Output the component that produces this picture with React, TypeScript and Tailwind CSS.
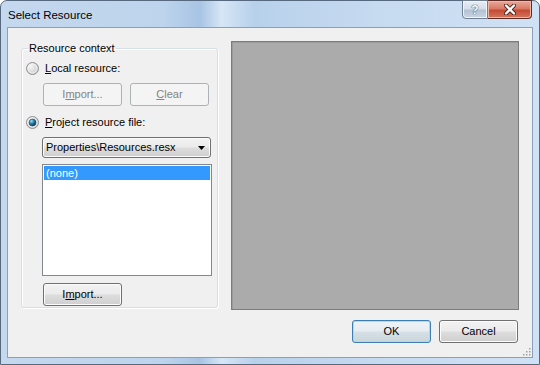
import React from "react";

const btn =
  "w-[79px] h-[23px] rounded-[3px] border border-[#707070] bg-[linear-gradient(#f2f2f2_0%,#ebebeb_48%,#dddddd_52%,#cfcfcf_100%)] shadow-[inset_0_0_0_1px_#fcfcfc] text-[11px] text-black flex items-center justify-center";
const btnDisabled =
  "w-[79px] h-[23px] rounded-[3px] border border-[#adb2b5] bg-[#f4f4f4] text-[11px] text-[#838383] flex items-center justify-center";

function Radio({ checked }: { checked?: boolean }) {
  return (
    <svg width="13" height="13" viewBox="0 0 13 13" className="shrink-0">
      <defs>
        <radialGradient id="rOff" cx="0.35" cy="0.35" r="0.7">
          <stop offset="0" stopColor="#f6f6f6" />
          <stop offset="1" stopColor="#cbcbcb" />
        </radialGradient>
        <radialGradient id="rDot" cx="0.35" cy="0.3" r="0.75">
          <stop offset="0" stopColor="#9fe2f2" />
          <stop offset="0.45" stopColor="#2a86b3" />
          <stop offset="1" stopColor="#0a2d45" />
        </radialGradient>
      </defs>
      <circle cx="6.5" cy="6.5" r="6" fill="url(#rOff)" stroke="#8e8f8f" />
      <circle cx="6.5" cy="6.5" r="4.5" fill="none" stroke="#fafafa" strokeOpacity="0.7" />
      {checked && <circle cx="6.5" cy="6.5" r="3.5" fill="url(#rDot)" stroke="#1d4f6e" strokeWidth="0.6" />}
    </svg>
  );
}

export default function App() {
  return (
    <div
      className="w-[540px] h-[365px] overflow-hidden bg-white text-[11px] text-black"
      style={{ fontFamily: '"Liberation Sans", Arial, sans-serif' }}
    >
      <div className="w-full h-full rounded-t-[7px] border border-[#56697f] bg-[linear-gradient(90deg,#c4d8ee_0%,#bdd4ec_30%,#a8c4e4_37%,#d6e6f6_41%,#b8d1eb_47%,#c6daf0_70%,#cfe1f4_100%)] flex flex-col">
        {/* title bar */}
        <div className="h-[26px] flex items-start shrink-0">
          <div className="pl-[7px] pt-[7px] text-[11.5px] text-black leading-[14px]">Select Resource</div>
          <div className="ml-auto mr-[7px] -mt-[1px] flex h-[19px]">
            <div className="w-[26px] h-[19px] rounded-bl-[4px] border border-[#6e7e90] bg-[linear-gradient(#e9eef4_0%,#d5dee8_45%,#b3c2d3_55%,#c9d6e3_100%)] shadow-[inset_0_0_0_1px_#f3f6f9] flex items-center justify-center">
              <span className="text-[12px] font-bold text-white leading-none [text-shadow:0_0_1px_#2c3e52,0_0_1px_#2c3e52]">?</span>
            </div>
            <div className="w-[44px] h-[19px] rounded-br-[4px] border border-l-0 border-[#5d2b25] bg-[linear-gradient(#e9a99b_0%,#d97a66_45%,#c44c34_55%,#d6765d_100%)] shadow-[inset_0_0_0_1px_#f0b7aa] flex items-center justify-center">
              <svg width="12" height="11" viewBox="0 0 12 11">
                <path d="M2 1.5 L10 9.5 M10 1.5 L2 9.5" stroke="#4a1b14" strokeWidth="4" strokeLinecap="round" />
                <path d="M2 1.5 L10 9.5 M10 1.5 L2 9.5" stroke="#ffffff" strokeWidth="2.4" strokeLinecap="round" />
              </svg>
            </div>
          </div>
        </div>

        {/* client area */}
        <div className="mx-[6px] h-[331px] border border-[#8b9fb7] bg-[#f0f0f0] relative">
          <div className="flex items-start gap-[13px] pt-[13px] pl-[13px] pr-[13px]">
            <fieldset className="w-[197px] h-[267px] rounded-[3px] border border-[#d5dfe5] shadow-[inset_1px_1px_0_#ffffff,1px_1px_0_#ffffff] flex flex-col">
              <legend className="ml-[6px] px-[1px] leading-[15px]">Resource context</legend>

              <div className="mt-[5px] ml-[4px] h-[14px] flex items-center gap-[6px]">
                <Radio />
                <span>
                  <span className="underline">L</span>ocal resource:
                </span>
              </div>

              <div className="mt-[8px] ml-[21px] flex gap-[8px]">
                <div className={btnDisabled}>
                  <span>
                    I<span className="underline">m</span>port...
                  </span>
                </div>
                <div className={btnDisabled}>
                  <span>
                    <span className="underline">C</span>lear
                  </span>
                </div>
              </div>

              <div className="mt-[9px] ml-[4px] h-[14px] flex items-center gap-[6px]">
                <Radio checked />
                <span>
                  <span className="underline">P</span>roject resource file:
                </span>
              </div>

              <div className="mt-[8px] ml-[20px] w-[169px] h-[21px] rounded-[3px] border border-[#707070] bg-[linear-gradient(#f2f2f2_0%,#ebebeb_48%,#dddddd_52%,#cfcfcf_100%)] shadow-[inset_0_0_0_1px_#fcfcfc] flex items-center pl-[3px] pr-[5px]">
                <span>Properties\Resources.resx</span>
                <svg width="7" height="4" viewBox="0 0 7 4" className="ml-auto">
                  <path d="M0 0 H7 L3.5 4 Z" fill="#000" />
                </svg>
              </div>

              <div className="mt-[6px] ml-[20px] w-[170px] h-[112px] border border-[#828790] bg-white p-[1px]">
                <div className="h-[14px] bg-[#3399ff] text-white leading-[14px] pl-[2px]">(none)</div>
              </div>

              <div className="mt-[7px] ml-[21px]">
                <div className={btn}>
                  <span>
                    I<span className="underline">m</span>port...
                  </span>
                </div>
              </div>
            </fieldset>

            <div className="w-[288px] h-[269px] border border-[#7c7c7c] bg-[#ababab] shadow-[inset_1px_1px_0_#9a9a9a]" />
          </div>

          <div className="mt-[10px] pr-[14px] flex justify-end gap-[8px]">
            <div className="w-[79px] h-[23px] rounded-[3px] border border-[#3c7fb1] bg-[linear-gradient(#eef3f6_0%,#e6edf1_48%,#d6e0e6_52%,#c9d5dc_100%)] shadow-[inset_0_0_0_1px_#a7dcf0] text-[11px] flex items-center justify-center">
              OK
            </div>
            <div className={btn}>Cancel</div>
          </div>

          {/* size grip */}
          <svg width="10" height="10" viewBox="0 0 10 10" className="absolute right-[1px] bottom-[1px]">
            {[
              [8, 2],
              [8, 5],
              [5, 5],
              [8, 8],
              [5, 8],
              [2, 8],
            ].map(([x, y], i) => (
              <rect key={i} x={x} y={y} width="1.5" height="1.5" fill="#a0a0a0" />
            ))}
          </svg>
        </div>
      </div>
    </div>
  );
}
